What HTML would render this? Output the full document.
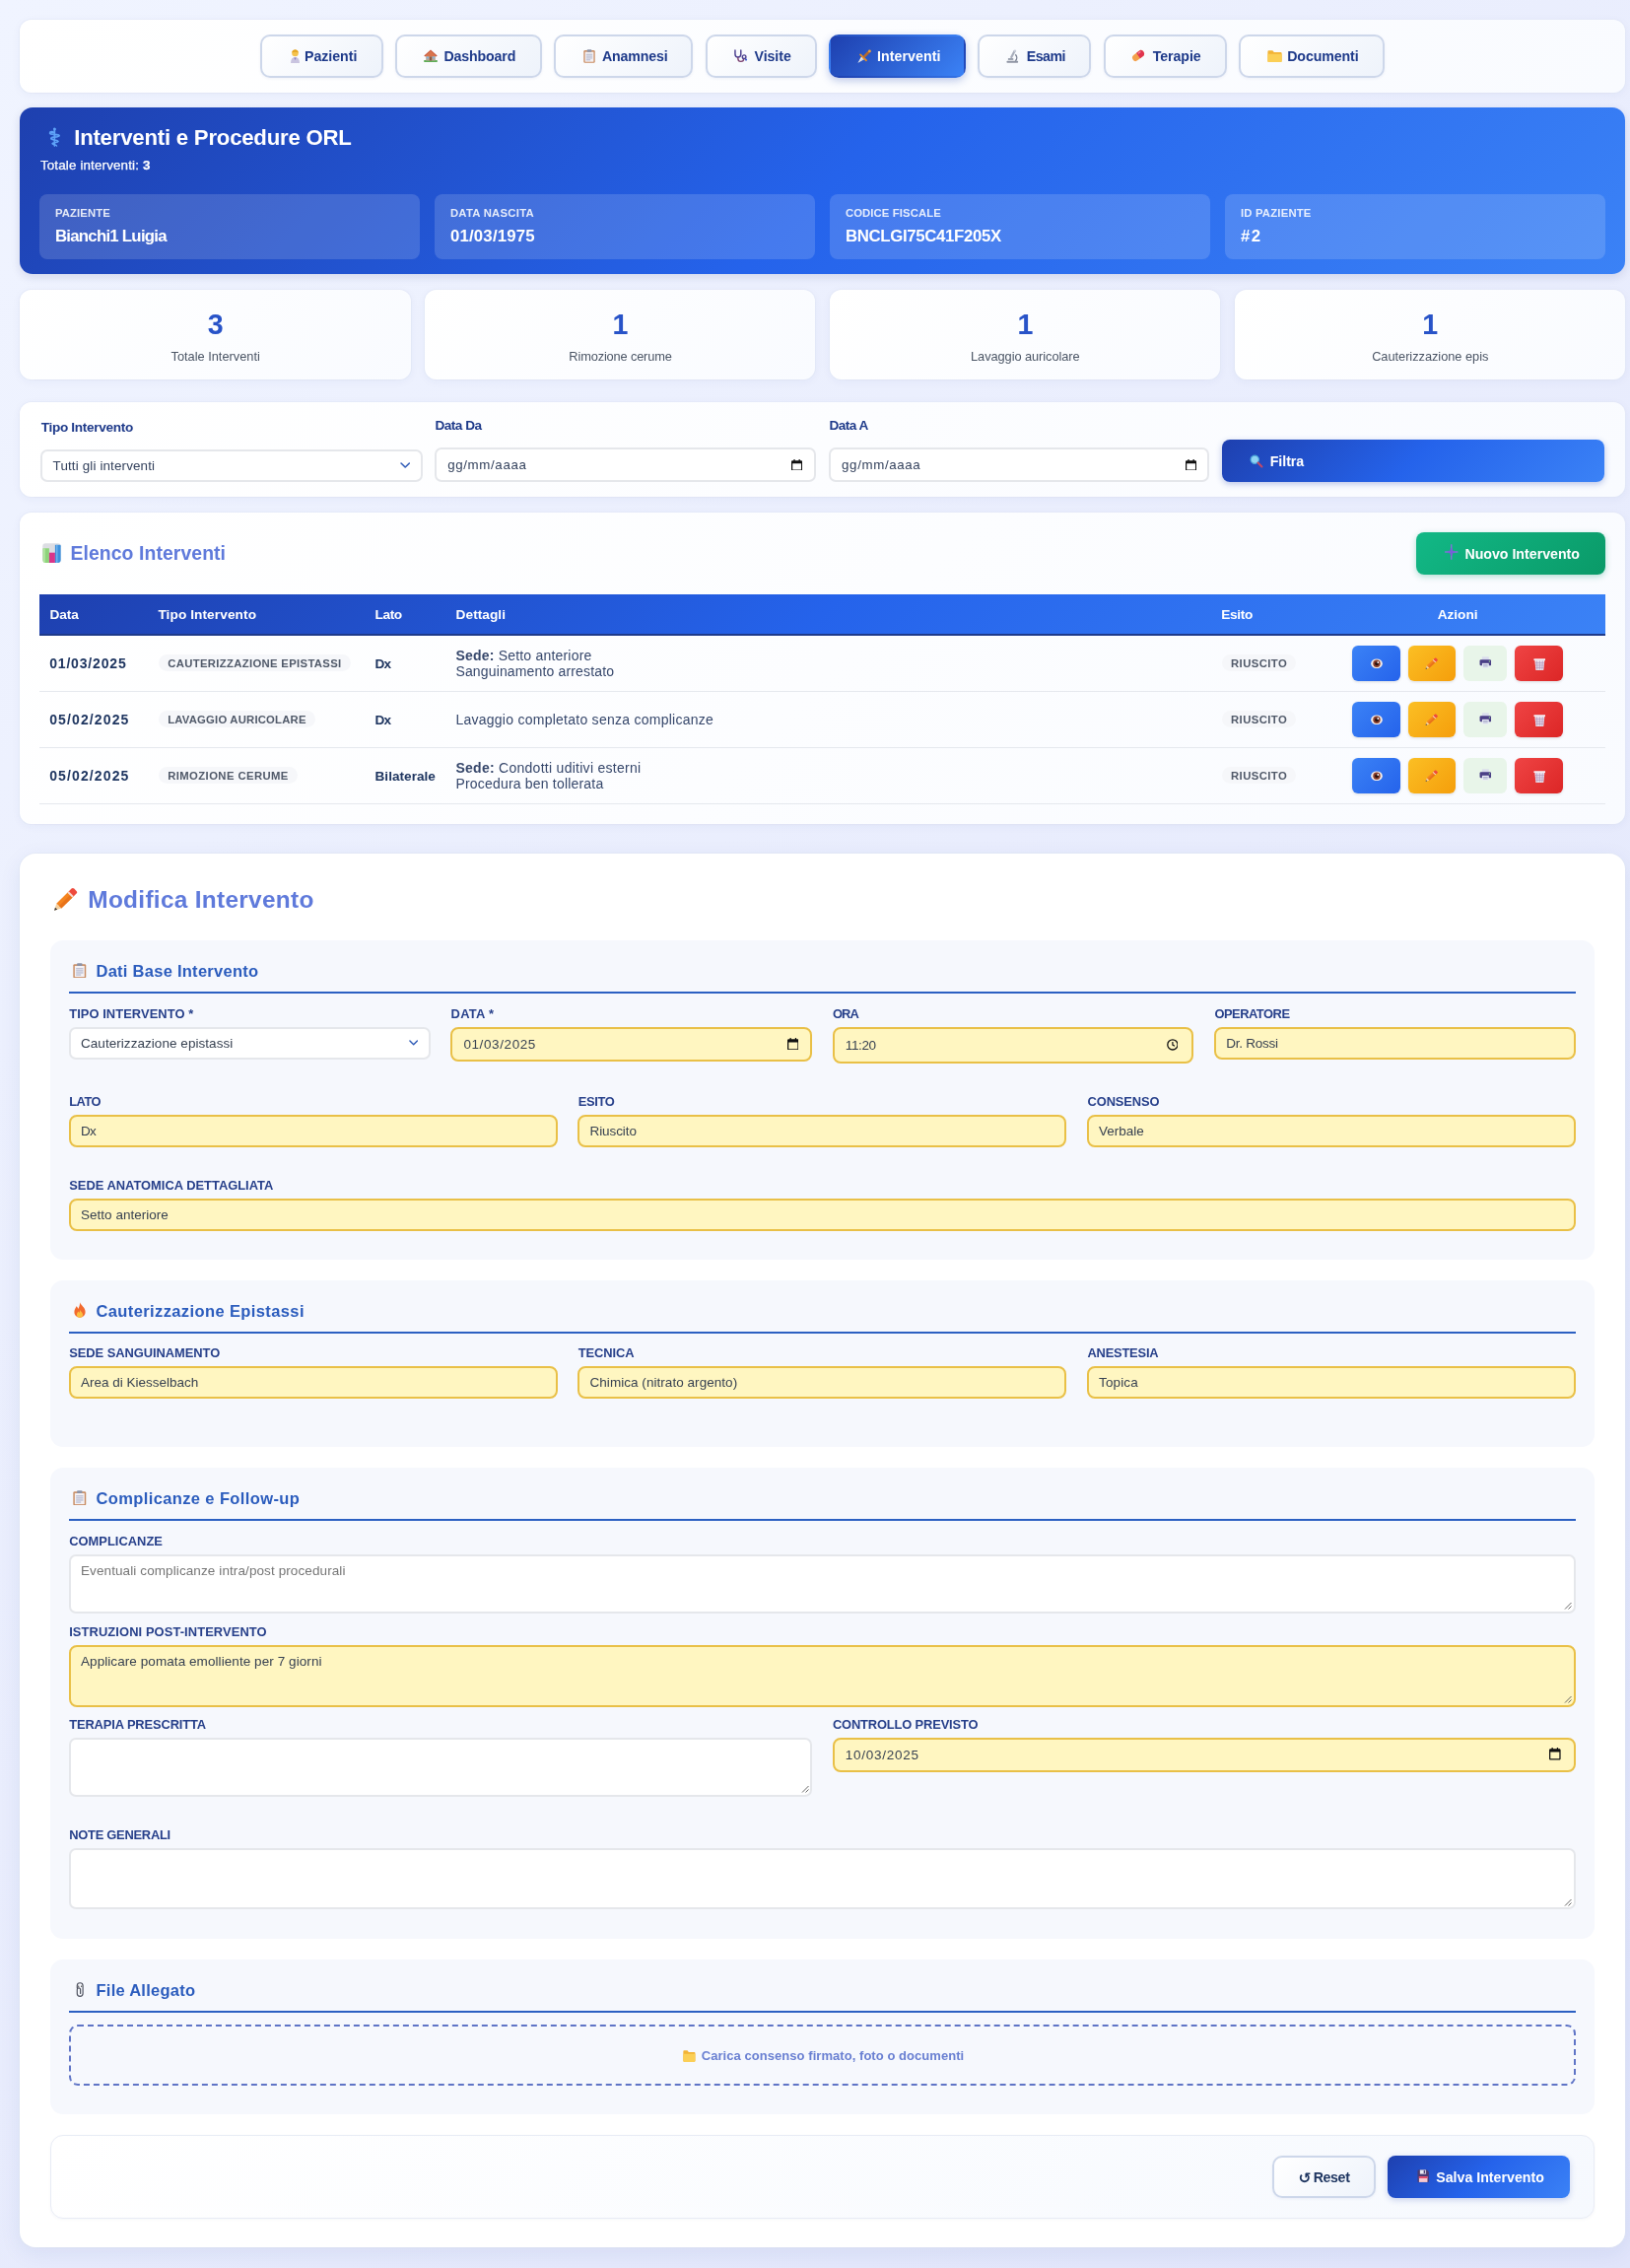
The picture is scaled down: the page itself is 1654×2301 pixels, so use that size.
<!DOCTYPE html>
<html lang="it"><head><meta charset="utf-8"><title>Interventi e Procedure ORL</title>
<style>
*{box-sizing:border-box;margin:0;padding:0}
html,body{width:1654px;height:2301px;overflow:hidden}
body{font-family:'Liberation Sans',sans-serif;position:relative;background:linear-gradient(135deg,#f0f4ff 0%,#e1e5fb 100%)}
span,label,h1,h2,h3,p,b{white-space:pre}
h1,h2,h3{font-weight:700}
.page{overflow:hidden;will-change:transform}
.card{background:linear-gradient(135deg,#ffffff 0%,#f9fbff 100%);border-radius:12px;box-shadow:0 2px 10px rgba(30,58,138,.05),0 0 0 1px rgba(228,233,246,.6)}
.nb{border:2px solid #cdd7ea;border-radius:10px;background:linear-gradient(135deg,#ffffff 0%,#eef3fb 100%);box-shadow:0 1px 3px rgba(30,58,138,.06)}
.nb.on{border-color:transparent;background:linear-gradient(135deg,#1e40af 0%,#3b82f6 100%);box-shadow:0 3px 8px rgba(30,64,175,.28)}
.hdr{background:linear-gradient(135deg,#1e40af 0%,#2563eb 50%,#3b82f6 100%);border-radius:13px;box-shadow:0 3px 10px rgba(30,41,100,.13)}
.ib{background:rgba(255,255,255,.15);border-radius:8px}
.inp{border:2px solid #e5e7eb;border-radius:7px;background:#fff}
.inp.y{border:2px solid #e9c047;background:#fff6c1;border-radius:8px}
.btn{border-radius:8px}
.sec{background:#f6f8fd;border-radius:13px}
.ul{background:#2c60c2}
.badge{background:#f6f7fa;border-radius:9px}
.ab{border-radius:6px;box-shadow:0 1px 3px rgba(0,0,0,.12)}

</style></head>
<body>
<main class="page" style="position:absolute;left:0.00px;top:0.00px;width:1654.00px;height:2301.00px;">
<nav class="card" style="position:absolute;left:20.00px;top:20.00px;width:1629.00px;height:74.00px;"><a class="nb" style="position:absolute;left:244.00px;top:15.00px;width:125.00px;height:44.00px;"><svg class="ic" viewBox="0 0 11 14" width="11" height="14" preserveAspectRatio="none" style="position:absolute;left:28.20px;top:12.80px;"><path d="M1 14c0-4 1.5-6 4.5-6s4.5 2 4.5 6z" fill="#c9c4e0"/><path d="M4.2 8.5l1.3 2.5 1.3-2.5z" fill="#8b7fc0"/><circle cx="5.5" cy="4" r="3.3" fill="#f5c34d"/><path d="M2.2 3.4c.3-2.2 1.8-3.2 3.3-3.2s3 .9 3.3 3.2c-1.2-.9-5.4-.9-6.600 0z" fill="#e5a520"/></svg><span style="position:absolute;left:43.00px;top:12.00px;font-size:14.2px;line-height:16px;font-weight:700;color:#1e3a8a;letter-spacing:-0.032px;">Pazienti</span></a><a class="nb" style="position:absolute;left:381.00px;top:15.00px;width:149.00px;height:44.00px;"><svg class="ic" viewBox="0 0 14 13" width="14" height="13" preserveAspectRatio="none" style="position:absolute;left:27.00px;top:13.30px;"><rect x="0" y="11" width="14" height="2" rx="1" fill="#5fae57"/><rect x="2.2" y="5.5" width="9.600" height="6" fill="#b9a79a"/><path d="M.3 6.400 7 .5l6.700 5.900-1 1L7 2.500 1.300 7.400z" fill="#c8553a"/><path d="M7 1.800 2.200 6v1.200h9.600V6z" fill="#d9744c"/><rect x="5.800" y="7.500" width="2.400" height="4" fill="#8a5a44"/><rect x="3" y="7.500" width="1.800" height="1.800" fill="#7fb6e6"/><rect x="9.200" y="7.500" width="1.800" height="1.800" fill="#7fb6e6"/></svg><span style="position:absolute;left:47.50px;top:12.00px;font-size:14.2px;line-height:16px;font-weight:700;color:#1e3a8a;letter-spacing:-0.151px;">Dashboard</span></a><a class="nb" style="position:absolute;left:542.00px;top:15.00px;width:141.00px;height:44.00px;"><svg class="ic" viewBox="0 0 12 15" width="12" height="14" preserveAspectRatio="none" style="position:absolute;left:27.50px;top:12.80px;"><rect x=".3" y="1.200" width="11.400" height="13.500" rx="1.300" fill="#c98d63"/><rect x="1.600" y="2.800" width="8.800" height="10.800" fill="#f4f1f4"/><rect x="3.600" y=".2" width="4.800" height="2.800" rx=".8" fill="#8d93a6"/><path d="M2.800 5.600h6.400M2.800 7.600h6.400M2.800 9.600h6.400M2.800 11.600h4.400" stroke="#9aa3c2" stroke-width=".8"/></svg><span style="position:absolute;left:46.90px;top:12.00px;font-size:14.2px;line-height:16px;font-weight:700;color:#1e3a8a;letter-spacing:-0.130px;">Anamnesi</span></a><a class="nb" style="position:absolute;left:696.00px;top:15.00px;width:113.00px;height:44.00px;"><svg class="ic" viewBox="0 0 15 14" width="14.6" height="13.5" preserveAspectRatio="none" style="position:absolute;left:26.20px;top:13.05px;"><path d="M2 1v4.200a3 3 0 0 0 6 0V1" fill="none" stroke="#4b3f8f" stroke-width="1.500" stroke-linecap="round"/><path d="M5 8.200v1.600a3 3 0 0 0 6 0V9.300" fill="none" stroke="#7a3f6f" stroke-width="1.400"/><circle cx="11.400" cy="8" r="1.900" fill="none" stroke="#4b3f8f" stroke-width="1.400"/><circle cx="13.400" cy="11" r="1.100" fill="#3b5bd0"/></svg><span style="position:absolute;left:47.50px;top:12.00px;font-size:14.2px;line-height:16px;font-weight:700;color:#1e3a8a;letter-spacing:-0.062px;">Visite</span></a><a class="nb on" style="position:absolute;left:821.00px;top:15.00px;width:139.00px;height:44.00px;"><svg class="ic" viewBox="0 0 15 15" width="14.3" height="14.3" preserveAspectRatio="none" style="position:absolute;left:26.70px;top:12.65px;"><path d="M.5 14.500 4.400 7.600l3 3z" fill="#eef1f7"/><path d="M.5 14.500l5.400-5.400 1.500 1.500z" fill="#c3cadb"/><path d="M3.200 5.600l6.200 6.200" stroke="#e48b25" stroke-width="1.900" stroke-linecap="round"/><path d="M7.600 7.400l4.600-4.600" stroke="#b86a2a" stroke-width="2.600" stroke-linecap="round"/><circle cx="13" cy="2" r="1.500" fill="#eda03a"/></svg><span style="position:absolute;left:46.90px;top:12.00px;font-size:14.2px;line-height:16px;font-weight:700;color:#ffffff;letter-spacing:0.082px;">Interventi</span></a><a class="nb" style="position:absolute;left:972.00px;top:15.00px;width:115.00px;height:44.00px;"><svg class="ic" viewBox="0 0 15 15" width="14.6" height="14" preserveAspectRatio="none" style="position:absolute;left:26.40px;top:12.80px;"><rect x="1.500" y="12.600" width="12" height="2" rx=".8" fill="#8e94a3"/><path d="M9 1.200l2 1-4 7.600-2-1z" fill="#a7adbb"/><path d="M10.600 5.600a5 5 0 0 1 0 7" fill="none" stroke="#7d8495" stroke-width="1.500"/><rect x="3" y="10" width="5.500" height="1.400" fill="#6f7688"/><circle cx="10.200" cy="1.900" r="1.300" fill="#c7ccd8"/></svg><span style="position:absolute;left:47.80px;top:12.00px;font-size:14.2px;line-height:16px;font-weight:700;color:#1e3a8a;letter-spacing:-0.528px;">Esami</span></a><a class="nb" style="position:absolute;left:1100.00px;top:15.00px;width:125.00px;height:44.00px;"><svg class="ic" viewBox="0 0 15 13" width="14" height="13" preserveAspectRatio="none" style="position:absolute;left:26.30px;top:13.30px;"><g transform="rotate(-35 7.500 6.500)"><rect x="0.500" y="3" width="14" height="7" rx="3.500" fill="#f3a04b"/><path d="M7.500 3H11a3.500 3.500 0 0 1 0 7H7.500z" fill="#e0344f"/><rect x="8.500" y="4" width="3.500" height="1.300" rx=".6" fill="#f58aa0"/></g></svg><span style="position:absolute;left:47.70px;top:12.00px;font-size:14.2px;line-height:16px;font-weight:700;color:#1e3a8a;letter-spacing:-0.070px;">Terapie</span></a><a class="nb" style="position:absolute;left:1237.00px;top:15.00px;width:148.00px;height:44.00px;"><svg class="ic" viewBox="0 0 15 12" width="15" height="12.5" preserveAspectRatio="none" style="position:absolute;left:26.60px;top:13.55px;"><path d="M.4 1.600c0-.8.500-1.300 1.300-1.300h3.600l1.500 1.600h6.500c.8 0 1.300.5 1.300 1.300v7.200c0 .8-.5 1.300-1.300 1.300H1.700c-.8 0-1.300-.5-1.300-1.300z" fill="#f2b336"/><path d="M.4 3.600h14.200v6.800c0 .8-.5 1.300-1.300 1.300H1.700c-.8 0-1.300-.5-1.300-1.300z" fill="#fbcf56"/></svg><span style="position:absolute;left:47.20px;top:12.00px;font-size:14.2px;line-height:16px;font-weight:700;color:#1e3a8a;letter-spacing:-0.102px;">Documenti</span></a></nav>
<header class="hdr" style="position:absolute;left:20.00px;top:109.00px;width:1629.00px;height:168.50px;"><span style="position:absolute;left:28.60px;top:17.00px;font-size:25px;line-height:28px;font-weight:400;color:#60a5fa;letter-spacing:0.000px;font-family:'DejaVu Sans',sans-serif;-webkit-text-stroke:.7px #60a5fa;">⚕</span><h1 style="position:absolute;left:55.20px;top:18.00px;font-size:22.2px;line-height:25px;font-weight:700;color:#ffffff;letter-spacing:-0.223px;">Interventi e Procedure ORL</h1><p style="position:absolute;left:20.90px;top:51.00px;font-size:13.4px;line-height:15px;font-weight:400;color:#ffffff;letter-spacing:0.148px;-webkit-text-stroke:.25px #fff;">Totale interventi: <b>3</b></p><div class="ib" style="position:absolute;left:20.00px;top:88.00px;width:385.80px;height:66.00px;"><span style="position:absolute;left:15.90px;top:13.00px;font-size:11.3px;line-height:12px;font-weight:700;color:rgba(255,255,255,.86);letter-spacing:0.124px;">PAZIENTE</span><span style="position:absolute;left:15.90px;top:33.00px;font-size:16.8px;line-height:19px;font-weight:700;color:#ffffff;letter-spacing:-0.738px;">Bianchi1 Luigia</span></div><div class="ib" style="position:absolute;left:421.00px;top:88.00px;width:385.80px;height:66.00px;"><span style="position:absolute;left:15.90px;top:13.00px;font-size:11.3px;line-height:12px;font-weight:700;color:rgba(255,255,255,.86);letter-spacing:0.273px;">DATA NASCITA</span><span style="position:absolute;left:15.90px;top:33.00px;font-size:16.8px;line-height:19px;font-weight:700;color:#ffffff;letter-spacing:0.200px;">01/03/1975</span></div><div class="ib" style="position:absolute;left:822.00px;top:88.00px;width:385.80px;height:66.00px;"><span style="position:absolute;left:15.90px;top:13.00px;font-size:11.3px;line-height:12px;font-weight:700;color:rgba(255,255,255,.86);letter-spacing:0.115px;">CODICE FISCALE</span><span style="position:absolute;left:15.90px;top:33.00px;font-size:16.8px;line-height:19px;font-weight:700;color:#ffffff;letter-spacing:-0.328px;">BNCLGI75C41F205X</span></div><div class="ib" style="position:absolute;left:1223.00px;top:88.00px;width:385.80px;height:66.00px;"><span style="position:absolute;left:15.90px;top:13.00px;font-size:11.3px;line-height:12px;font-weight:700;color:rgba(255,255,255,.86);letter-spacing:0.203px;">ID PAZIENTE</span><span style="position:absolute;left:15.90px;top:33.00px;font-size:16.8px;line-height:19px;font-weight:700;color:#ffffff;letter-spacing:1.628px;">#2</span></div></header>
<section class="card" style="position:absolute;left:20.00px;top:294.30px;width:396.50px;height:91.00px;"><span style="position:absolute;left:198.65px;transform:translateX(-50%);top:18.70px;font-size:28.6px;line-height:32px;font-weight:700;color:#2853c8;letter-spacing:0.000px;">3</span><span style="position:absolute;left:198.65px;transform:translateX(-50%);top:59.70px;font-size:12.8px;line-height:15px;font-weight:400;color:#4b5565;letter-spacing:-0.003px;">Totale Interventi</span></section>
<section class="card" style="position:absolute;left:430.90px;top:294.30px;width:396.50px;height:91.00px;"><span style="position:absolute;left:198.65px;transform:translateX(-50%);top:18.70px;font-size:28.6px;line-height:32px;font-weight:700;color:#2853c8;letter-spacing:0.000px;">1</span><span style="position:absolute;left:198.65px;transform:translateX(-50%);top:59.70px;font-size:12.8px;line-height:15px;font-weight:400;color:#4b5565;letter-spacing:-0.146px;">Rimozione cerume</span></section>
<section class="card" style="position:absolute;left:841.70px;top:294.30px;width:396.50px;height:91.00px;"><span style="position:absolute;left:198.65px;transform:translateX(-50%);top:18.70px;font-size:28.6px;line-height:32px;font-weight:700;color:#2853c8;letter-spacing:0.000px;">1</span><span style="position:absolute;left:198.65px;transform:translateX(-50%);top:59.70px;font-size:12.8px;line-height:15px;font-weight:400;color:#4b5565;letter-spacing:-0.061px;">Lavaggio auricolare</span></section>
<section class="card" style="position:absolute;left:1252.60px;top:294.30px;width:396.50px;height:91.00px;"><span style="position:absolute;left:198.65px;transform:translateX(-50%);top:18.70px;font-size:28.6px;line-height:32px;font-weight:700;color:#2853c8;letter-spacing:0.000px;">1</span><span style="position:absolute;left:198.65px;transform:translateX(-50%);top:59.70px;font-size:12.8px;line-height:15px;font-weight:400;color:#4b5565;letter-spacing:-0.031px;">Cauterizzazione epis</span></section>
<section class="card" style="position:absolute;left:20.00px;top:408.00px;width:1629.00px;height:96.00px;"><label style="position:absolute;left:21.70px;top:18.00px;font-size:13.6px;line-height:15px;font-weight:700;color:#1e3a8a;letter-spacing:-0.310px;">Tipo Intervento</label><div class="inp" style="position:absolute;left:21.30px;top:48.00px;width:387.30px;height:33.00px;"><span style="position:absolute;left:10.30px;top:7.00px;font-size:13.4px;line-height:15px;font-weight:400;color:#33415c;letter-spacing:0.141px;">Tutti gli interventi</span><svg class="ic" viewBox="0 0 10 6" width="10.4" height="6" preserveAspectRatio="none" style="position:absolute;left:362.50px;top:11.30px;"><path d="M1 1l4 4 4-4" fill="none" stroke="#2f5bb7" stroke-width="1.500" stroke-linecap="round" stroke-linejoin="round"/></svg></div><label style="position:absolute;left:421.50px;top:16.00px;font-size:13.6px;line-height:15px;font-weight:700;color:#1e3a8a;letter-spacing:-0.521px;">Data Da</label><div class="inp" style="position:absolute;left:421.30px;top:46.00px;width:386.30px;height:35.00px;"><span style="position:absolute;left:10.90px;top:8.00px;font-size:13.3px;line-height:15px;font-weight:400;color:#33415c;letter-spacing:0.642px;">gg/mm/aaaa</span><svg class="ic" viewBox="0 0 12 13" width="11.2" height="11.8" preserveAspectRatio="none" style="position:absolute;left:359.80px;top:9.60px;"><path d="M2.600 0v1.300H1.300C.6 1.300 0 1.900 0 2.600v9.100C0 12.400.6 13 1.300 13h9.400c.7 0 1.300-.6 1.300-1.300V2.600c0-.7-.6-1.300-1.300-1.300H9.400V0H8.100v1.300H3.900V0zM1.300 4.600h9.400v7.100H1.300z" fill="#111"/></svg></div><label style="position:absolute;left:821.40px;top:16.00px;font-size:13.6px;line-height:15px;font-weight:700;color:#1e3a8a;letter-spacing:-0.512px;">Data A</label><div class="inp" style="position:absolute;left:821.20px;top:46.00px;width:386.30px;height:35.00px;"><span style="position:absolute;left:10.90px;top:8.00px;font-size:13.3px;line-height:15px;font-weight:400;color:#33415c;letter-spacing:0.642px;">gg/mm/aaaa</span><svg class="ic" viewBox="0 0 12 13" width="11.2" height="11.8" preserveAspectRatio="none" style="position:absolute;left:359.80px;top:9.60px;"><path d="M2.600 0v1.300H1.300C.6 1.300 0 1.900 0 2.600v9.100C0 12.400.6 13 1.300 13h9.400c.7 0 1.300-.6 1.300-1.300V2.600c0-.7-.6-1.300-1.300-1.300H9.400V0H8.100v1.300H3.900V0zM1.300 4.600h9.400v7.100H1.300z" fill="#111"/></svg></div><button class="btn" style="position:absolute;left:1220.00px;top:38.00px;width:388.00px;height:42.60px;border:0;background:linear-gradient(135deg,#1e40af 0%,#2563eb 50%,#3b82f6 100%);box-shadow:0 2px 6px rgba(30,64,175,.3);"><svg class="ic" viewBox="0 0 14 14" width="13.6" height="13.6" preserveAspectRatio="none" style="position:absolute;left:28.40px;top:15.20px;"><circle cx="5.400" cy="5.400" r="4.300" fill="#8fd3f4" stroke="#4aa3d8" stroke-width="1.200"/><path d="M8.800 8.800l4 4" stroke="#c0486a" stroke-width="2.200" stroke-linecap="round"/></svg><span style="position:absolute;left:48.70px;top:14.00px;font-size:14.2px;line-height:16px;font-weight:700;color:#ffffff;letter-spacing:-0.037px;">Filtra</span></button></section>
<section class="card" style="position:absolute;left:20.00px;top:520.00px;width:1629.00px;height:315.60px;"><svg class="ic" viewBox="0 0 19 20" width="19" height="20.2" preserveAspectRatio="none" style="position:absolute;left:23.40px;top:31.20px;"><clipPath id="chc"><rect x=".3" y=".3" width="18.400" height="19.400" rx="2.800"/></clipPath><g clip-path="url(#chc)"><rect width="19" height="20" fill="#dcdde3"/><rect x=".3" y="5.200" width="6.600" height="15" fill="#8ed47c"/><rect x="6.900" y="9.600" width="6" height="11" fill="#d8368a"/><rect x="12.900" y="1.800" width="6" height="19" fill="#3d90dd"/><rect x="1.200" y="5.200" width="1.600" height="15" fill="#b5e6a4"/><rect x="14" y="1.800" width="1.500" height="19" fill="#6fb1ec"/></g></svg><h2 style="position:absolute;left:51.50px;top:30.00px;font-size:19.4px;line-height:22px;font-weight:700;color:#5f7adb;letter-spacing:0.078px;">Elenco Interventi</h2><button class="btn" style="position:absolute;left:1417.00px;top:20.20px;width:192.20px;height:42.80px;border:0;background:linear-gradient(135deg,#12b886 0%,#0a9a68 100%);box-shadow:0 2px 6px rgba(5,150,105,.3);"><svg class="ic" viewBox="0 0 14 16" width="13.5" height="16" preserveAspectRatio="none" style="position:absolute;left:29.20px;top:12.20px;"><path d="M7 .8v14.400M.6 8h12.800" stroke="#8a6ee0" stroke-width="1.500" stroke-linecap="round" opacity=".9"/><path d="M7 5.500v5M4.500 8h5" stroke="#7a5fd8" stroke-width="2.400" stroke-linecap="round"/></svg><span style="position:absolute;left:49.40px;top:13.80px;font-size:14.2px;line-height:16px;font-weight:700;color:#ffffff;letter-spacing:-0.005px;">Nuovo Intervento</span></button><div class="tbl" style="position:absolute;left:20.00px;top:83.00px;width:1589.00px;height:213.00px;"><div class="thead" style="position:absolute;left:0.00px;top:0.00px;width:1589.00px;height:42.00px;background:linear-gradient(135deg,#1e40af 0%,#2563eb 50%,#3b82f6 100%);border-bottom:2px solid #1e3a8a;"><span style="position:absolute;left:10.40px;top:13.00px;font-size:13.7px;line-height:15px;font-weight:700;color:#ffffff;letter-spacing:-0.057px;">Data</span><span style="position:absolute;left:120.40px;top:13.00px;font-size:13.7px;line-height:15px;font-weight:700;color:#ffffff;letter-spacing:0.071px;">Tipo Intervento</span><span style="position:absolute;left:340.50px;top:13.00px;font-size:13.7px;line-height:15px;font-weight:700;color:#ffffff;letter-spacing:-0.402px;">Lato</span><span style="position:absolute;left:422.60px;top:13.00px;font-size:13.7px;line-height:15px;font-weight:700;color:#ffffff;letter-spacing:0.028px;">Dettagli</span><span style="position:absolute;left:1199.30px;top:13.00px;font-size:13.7px;line-height:15px;font-weight:700;color:#ffffff;letter-spacing:-0.342px;">Esito</span><span style="position:absolute;left:1418.70px;top:13.00px;font-size:13.7px;line-height:15px;font-weight:700;color:#ffffff;letter-spacing:-0.033px;">Azioni</span></div><div class="tr" style="position:absolute;left:0.00px;top:42.00px;width:1589.00px;height:57.00px;border-bottom:1px solid #e5e8ee;"><span style="position:absolute;left:10.20px;top:20.00px;font-size:14px;line-height:16px;font-weight:700;color:#1e3560;letter-spacing:0.825px;">01/03/2025</span><div class="badge" style="position:absolute;left:120.60px;top:19.40px;width:195.60px;height:17.00px;"></div><span style="position:absolute;left:130.20px;top:22.00px;font-size:11.3px;line-height:12px;font-weight:700;color:#505969;letter-spacing:0.333px;">CAUTERIZZAZIONE EPISTASSI</span><span style="position:absolute;left:340.50px;top:21.00px;font-size:13.6px;line-height:15px;font-weight:700;color:#1e3560;letter-spacing:-0.891px;">Dx</span><span style="position:absolute;left:422.40px;top:12.00px;font-size:14px;line-height:16px;font-weight:400;color:#36476b;letter-spacing:0.204px;"><b>Sede:</b> Setto anteriore</span><span style="position:absolute;left:422.40px;top:28.00px;font-size:14px;line-height:16px;font-weight:400;color:#36476b;letter-spacing:0.154px;">Sanguinamento arrestato</span><div class="badge" style="position:absolute;left:1200.40px;top:19.40px;width:74.40px;height:17.00px;"></div><span style="position:absolute;left:1209.00px;top:22.00px;font-size:11.3px;line-height:12px;font-weight:700;color:#505969;letter-spacing:0.417px;">RIUSCITO</span><button class="ab" style="position:absolute;left:1332.00px;top:10.00px;width:48.80px;height:36.00px;border:0;background:linear-gradient(135deg,#3b82f6,#2563eb);"></button><svg class="ic" viewBox="0 0 12 10.600" width="12" height="10.6" preserveAspectRatio="none" style="position:absolute;left:1350.80px;top:22.60px;"><ellipse cx="6" cy="5.300" rx="5.800" ry="4.900" fill="#f3ece9"/><circle cx="6" cy="5.300" r="3.700" fill="#8a3f2c"/><circle cx="6" cy="5.300" r="1.900" fill="#2b1210"/><circle cx="7.300" cy="4" r=".9" fill="#fff"/></svg><button class="ab" style="position:absolute;left:1389.00px;top:10.00px;width:48.30px;height:36.00px;border:0;background:linear-gradient(135deg,#fbbf24,#f59e0b);"></button><svg class="ic" viewBox="0 0 14 14" width="13.5" height="12.4" preserveAspectRatio="none" style="position:absolute;left:1406.00px;top:22.40px;"><path d="M1.800 9.400 8.800 2.400l2.800 2.800-7 7z" fill="#f5841f"/><path d="M3.200 10.800l7-7 1.400 1.400-7 7z" fill="#e8731a"/><path d="M8 3.200l.8-.8 2.800 2.800-.8.800z" fill="#f7d9d4"/><path d="M8.800 2.400l1.500-1.500c.5-.5 1-.5 1.500 0l1.300 1.300c.5.500.5 1 0 1.500l-1.500 1.500z" fill="#ee4a3c"/><path d="M1.800 9.400l2.800 2.800-4 1.200z" fill="#f3cf9e"/><path d="M.6 13.400l.5-1.700 1.200 1.200z" fill="#2b2b2b"/></svg><button class="ab" style="position:absolute;left:1445.00px;top:10.00px;width:43.80px;height:36.00px;border:0;background:#e8f5e9;box-shadow:none;"></button><svg class="ic" viewBox="0 0 14 13" width="12.7" height="12" preserveAspectRatio="none" style="position:absolute;left:1460.50px;top:21.20px;"><rect x="3.200" y=".4" width="7.600" height="4" fill="#d9dced"/><rect x=".6" y="3.600" width="12.800" height="6.400" rx="1.400" fill="#4a3f86"/><rect x="3.200" y="7.400" width="7.600" height="5.200" fill="#e9ebf6"/><path d="M4.400 9.200h5.200M4.400 10.800h5.200" stroke="#8a8fb5" stroke-width=".7"/><circle cx="11.400" cy="5.400" r=".7" fill="#9be28f"/></svg><button class="ab" style="position:absolute;left:1497.00px;top:10.00px;width:49.00px;height:36.00px;border:0;background:linear-gradient(135deg,#ef4444,#dc2626);"></button><svg class="ic" viewBox="0 0 12.700 13.300" width="12.7" height="13.3" preserveAspectRatio="none" style="position:absolute;left:1515.50px;top:22.00px;"><path d="M1.300 2.600h10.100l-1.100 10.400H2.400z" fill="#e9dfe9"/><rect x=".4" y="1.300" width="11.900" height="1.800" rx=".5" fill="#f6eff5"/><path d="M3.400 3.400l.5 9M6.350 3.400v9M9.300 3.400l-.5 9M1.800 5.600h9.100M2 8h8.700M2.300 10.400h8.100" stroke="#b89ac0" stroke-width=".8"/></svg></div><div class="tr" style="position:absolute;left:0.00px;top:99.00px;width:1589.00px;height:57.00px;border-bottom:1px solid #e5e8ee;"><span style="position:absolute;left:10.20px;top:20.00px;font-size:14px;line-height:16px;font-weight:700;color:#1e3560;letter-spacing:1.125px;">05/02/2025</span><div class="badge" style="position:absolute;left:120.60px;top:19.40px;width:159.90px;height:17.00px;"></div><span style="position:absolute;left:130.20px;top:22.00px;font-size:11.3px;line-height:12px;font-weight:700;color:#505969;letter-spacing:0.205px;">LAVAGGIO AURICOLARE</span><span style="position:absolute;left:340.50px;top:21.00px;font-size:13.6px;line-height:15px;font-weight:700;color:#1e3560;letter-spacing:-0.891px;">Dx</span><span style="position:absolute;left:422.40px;top:20.00px;font-size:14px;line-height:16px;font-weight:400;color:#36476b;letter-spacing:0.257px;">Lavaggio completato senza complicanze</span><div class="badge" style="position:absolute;left:1200.40px;top:19.40px;width:74.40px;height:17.00px;"></div><span style="position:absolute;left:1209.00px;top:22.00px;font-size:11.3px;line-height:12px;font-weight:700;color:#505969;letter-spacing:0.417px;">RIUSCITO</span><button class="ab" style="position:absolute;left:1332.00px;top:10.00px;width:48.80px;height:36.00px;border:0;background:linear-gradient(135deg,#3b82f6,#2563eb);"></button><svg class="ic" viewBox="0 0 12 10.600" width="12" height="10.6" preserveAspectRatio="none" style="position:absolute;left:1350.80px;top:22.60px;"><ellipse cx="6" cy="5.300" rx="5.800" ry="4.900" fill="#f3ece9"/><circle cx="6" cy="5.300" r="3.700" fill="#8a3f2c"/><circle cx="6" cy="5.300" r="1.900" fill="#2b1210"/><circle cx="7.300" cy="4" r=".9" fill="#fff"/></svg><button class="ab" style="position:absolute;left:1389.00px;top:10.00px;width:48.30px;height:36.00px;border:0;background:linear-gradient(135deg,#fbbf24,#f59e0b);"></button><svg class="ic" viewBox="0 0 14 14" width="13.5" height="12.4" preserveAspectRatio="none" style="position:absolute;left:1406.00px;top:22.40px;"><path d="M1.800 9.400 8.800 2.400l2.800 2.800-7 7z" fill="#f5841f"/><path d="M3.200 10.800l7-7 1.400 1.400-7 7z" fill="#e8731a"/><path d="M8 3.200l.8-.8 2.800 2.800-.8.800z" fill="#f7d9d4"/><path d="M8.800 2.400l1.500-1.500c.5-.5 1-.5 1.500 0l1.300 1.300c.5.500.5 1 0 1.500l-1.500 1.500z" fill="#ee4a3c"/><path d="M1.800 9.400l2.800 2.800-4 1.200z" fill="#f3cf9e"/><path d="M.6 13.400l.5-1.700 1.200 1.200z" fill="#2b2b2b"/></svg><button class="ab" style="position:absolute;left:1445.00px;top:10.00px;width:43.80px;height:36.00px;border:0;background:#e8f5e9;box-shadow:none;"></button><svg class="ic" viewBox="0 0 14 13" width="12.7" height="12" preserveAspectRatio="none" style="position:absolute;left:1460.50px;top:21.20px;"><rect x="3.200" y=".4" width="7.600" height="4" fill="#d9dced"/><rect x=".6" y="3.600" width="12.800" height="6.400" rx="1.400" fill="#4a3f86"/><rect x="3.200" y="7.400" width="7.600" height="5.200" fill="#e9ebf6"/><path d="M4.400 9.200h5.200M4.400 10.800h5.200" stroke="#8a8fb5" stroke-width=".7"/><circle cx="11.400" cy="5.400" r=".7" fill="#9be28f"/></svg><button class="ab" style="position:absolute;left:1497.00px;top:10.00px;width:49.00px;height:36.00px;border:0;background:linear-gradient(135deg,#ef4444,#dc2626);"></button><svg class="ic" viewBox="0 0 12.700 13.300" width="12.7" height="13.3" preserveAspectRatio="none" style="position:absolute;left:1515.50px;top:22.00px;"><path d="M1.300 2.600h10.100l-1.100 10.400H2.400z" fill="#e9dfe9"/><rect x=".4" y="1.300" width="11.900" height="1.800" rx=".5" fill="#f6eff5"/><path d="M3.400 3.400l.5 9M6.350 3.400v9M9.300 3.400l-.5 9M1.800 5.600h9.100M2 8h8.700M2.300 10.400h8.100" stroke="#b89ac0" stroke-width=".8"/></svg></div><div class="tr" style="position:absolute;left:0.00px;top:156.00px;width:1589.00px;height:57.00px;border-bottom:1px solid #e5e8ee;"><span style="position:absolute;left:10.20px;top:20.00px;font-size:14px;line-height:16px;font-weight:700;color:#1e3560;letter-spacing:1.125px;">05/02/2025</span><div class="badge" style="position:absolute;left:120.60px;top:19.40px;width:141.80px;height:17.00px;"></div><span style="position:absolute;left:130.20px;top:22.00px;font-size:11.3px;line-height:12px;font-weight:700;color:#505969;letter-spacing:0.406px;">RIMOZIONE CERUME</span><span style="position:absolute;left:340.50px;top:21.00px;font-size:13.6px;line-height:15px;font-weight:700;color:#1e3560;letter-spacing:0.020px;">Bilaterale</span><span style="position:absolute;left:422.40px;top:12.00px;font-size:14px;line-height:16px;font-weight:400;color:#36476b;letter-spacing:0.275px;"><b>Sede:</b> Condotti uditivi esterni</span><span style="position:absolute;left:422.40px;top:28.00px;font-size:14px;line-height:16px;font-weight:400;color:#36476b;letter-spacing:0.193px;">Procedura ben tollerata</span><div class="badge" style="position:absolute;left:1200.40px;top:19.40px;width:74.40px;height:17.00px;"></div><span style="position:absolute;left:1209.00px;top:22.00px;font-size:11.3px;line-height:12px;font-weight:700;color:#505969;letter-spacing:0.417px;">RIUSCITO</span><button class="ab" style="position:absolute;left:1332.00px;top:10.00px;width:48.80px;height:36.00px;border:0;background:linear-gradient(135deg,#3b82f6,#2563eb);"></button><svg class="ic" viewBox="0 0 12 10.600" width="12" height="10.6" preserveAspectRatio="none" style="position:absolute;left:1350.80px;top:22.60px;"><ellipse cx="6" cy="5.300" rx="5.800" ry="4.900" fill="#f3ece9"/><circle cx="6" cy="5.300" r="3.700" fill="#8a3f2c"/><circle cx="6" cy="5.300" r="1.900" fill="#2b1210"/><circle cx="7.300" cy="4" r=".9" fill="#fff"/></svg><button class="ab" style="position:absolute;left:1389.00px;top:10.00px;width:48.30px;height:36.00px;border:0;background:linear-gradient(135deg,#fbbf24,#f59e0b);"></button><svg class="ic" viewBox="0 0 14 14" width="13.5" height="12.4" preserveAspectRatio="none" style="position:absolute;left:1406.00px;top:22.40px;"><path d="M1.800 9.400 8.800 2.400l2.800 2.800-7 7z" fill="#f5841f"/><path d="M3.200 10.800l7-7 1.400 1.400-7 7z" fill="#e8731a"/><path d="M8 3.200l.8-.8 2.800 2.800-.8.800z" fill="#f7d9d4"/><path d="M8.800 2.400l1.500-1.500c.5-.5 1-.5 1.500 0l1.300 1.300c.5.500.5 1 0 1.500l-1.500 1.500z" fill="#ee4a3c"/><path d="M1.800 9.400l2.800 2.800-4 1.200z" fill="#f3cf9e"/><path d="M.6 13.400l.5-1.700 1.200 1.200z" fill="#2b2b2b"/></svg><button class="ab" style="position:absolute;left:1445.00px;top:10.00px;width:43.80px;height:36.00px;border:0;background:#e8f5e9;box-shadow:none;"></button><svg class="ic" viewBox="0 0 14 13" width="12.7" height="12" preserveAspectRatio="none" style="position:absolute;left:1460.50px;top:21.20px;"><rect x="3.200" y=".4" width="7.600" height="4" fill="#d9dced"/><rect x=".6" y="3.600" width="12.800" height="6.400" rx="1.400" fill="#4a3f86"/><rect x="3.200" y="7.400" width="7.600" height="5.200" fill="#e9ebf6"/><path d="M4.400 9.200h5.200M4.400 10.800h5.200" stroke="#8a8fb5" stroke-width=".7"/><circle cx="11.400" cy="5.400" r=".7" fill="#9be28f"/></svg><button class="ab" style="position:absolute;left:1497.00px;top:10.00px;width:49.00px;height:36.00px;border:0;background:linear-gradient(135deg,#ef4444,#dc2626);"></button><svg class="ic" viewBox="0 0 12.700 13.300" width="12.7" height="13.3" preserveAspectRatio="none" style="position:absolute;left:1515.50px;top:22.00px;"><path d="M1.300 2.600h10.100l-1.100 10.400H2.400z" fill="#e9dfe9"/><rect x=".4" y="1.300" width="11.900" height="1.800" rx=".5" fill="#f6eff5"/><path d="M3.400 3.400l.5 9M6.350 3.400v9M9.300 3.400l-.5 9M1.800 5.600h9.100M2 8h8.700M2.300 10.400h8.100" stroke="#b89ac0" stroke-width=".8"/></svg></div></div></section>
<form class="card" style="position:absolute;left:20.00px;top:866.00px;width:1629.00px;height:1414.40px;border-radius:17px;background:#ffffff;box-shadow:0 6px 22px rgba(30,58,138,.08),0 0 0 1px rgba(226,232,245,.6);border-radius:16px;"><svg class="ic" viewBox="0 0 14 14" width="25.2" height="24.8" preserveAspectRatio="none" style="position:absolute;left:33.80px;top:34.40px;"><path d="M1.800 9.400 8.800 2.400l2.800 2.800-7 7z" fill="#f5841f"/><path d="M3.200 10.800l7-7 1.400 1.400-7 7z" fill="#e8731a"/><path d="M8 3.200l.8-.8 2.800 2.800-.8.800z" fill="#f7d9d4"/><path d="M8.800 2.400l1.500-1.500c.5-.5 1-.5 1.500 0l1.300 1.300c.5.500.5 1 0 1.500l-1.500 1.500z" fill="#ee4a3c"/><path d="M1.800 9.400l2.800 2.800-4 1.200z" fill="#f3cf9e"/><path d="M.6 13.400l.5-1.700 1.200 1.200z" fill="#2b2b2b"/></svg><h2 style="position:absolute;left:69.30px;top:33.00px;font-size:24.4px;line-height:27px;font-weight:700;color:#5f7adb;letter-spacing:0.299px;">Modifica Intervento</h2>
<fieldset class="sec" style="position:absolute;left:30.80px;top:88.30px;width:1567.40px;height:324.00px;border:0;"><svg class="ic" viewBox="0 0 12 15" width="13.6" height="15.6" preserveAspectRatio="none" style="position:absolute;left:23.70px;top:22.60px;"><rect x=".3" y="1.200" width="11.400" height="13.500" rx="1.300" fill="#c98d63"/><rect x="1.600" y="2.800" width="8.800" height="10.800" fill="#f4f1f4"/><rect x="3.600" y=".2" width="4.800" height="2.800" rx=".8" fill="#8d93a6"/><path d="M2.800 5.600h6.400M2.800 7.600h6.400M2.800 9.600h6.400M2.800 11.600h4.400" stroke="#9aa3c2" stroke-width=".8"/></svg><h3 style="position:absolute;left:46.70px;top:21.70px;font-size:16.5px;line-height:18px;font-weight:700;color:#2b5cbd;letter-spacing:0.266px;">Dati Base Intervento</h3><div class="ul" style="position:absolute;left:19.20px;top:51.50px;width:1528.80px;height:2.00px;"></div><label style="position:absolute;left:19.40px;top:66.70px;font-size:12.9px;line-height:15px;font-weight:700;color:#263f8a;letter-spacing:0.070px;">TIPO INTERVENTO *</label><label style="position:absolute;left:406.80px;top:66.70px;font-size:12.9px;line-height:15px;font-weight:700;color:#263f8a;letter-spacing:0.297px;">DATA *</label><label style="position:absolute;left:794.20px;top:66.70px;font-size:12.9px;line-height:15px;font-weight:700;color:#263f8a;letter-spacing:-0.928px;">ORA</label><label style="position:absolute;left:1181.60px;top:66.70px;font-size:12.9px;line-height:15px;font-weight:700;color:#263f8a;letter-spacing:-0.484px;">OPERATORE</label><div class="inp" style="position:absolute;left:19.20px;top:87.70px;width:366.60px;height:33.00px;"><span style="position:absolute;left:10.00px;top:7.00px;font-size:13.5px;line-height:15px;font-weight:400;color:#374151;letter-spacing:0.051px;">Cauterizzazione epistassi</span><svg class="ic" viewBox="0 0 10 6" width="9.4" height="5.6" preserveAspectRatio="none" style="position:absolute;left:342.60px;top:11.20px;"><path d="M1 1l4 4 4-4" fill="none" stroke="#2f5bb7" stroke-width="1.500" stroke-linecap="round" stroke-linejoin="round"/></svg></div><div class="inp y" style="position:absolute;left:406.60px;top:87.70px;width:366.60px;height:35.00px;"><span style="position:absolute;left:11.00px;top:8.00px;font-size:13.5px;line-height:15px;font-weight:400;color:#374151;letter-spacing:0.602px;">01/03/2025</span><svg class="ic" viewBox="0 0 12 13" width="11.6" height="12.6" preserveAspectRatio="none" style="position:absolute;left:339.40px;top:8.60px;"><path d="M2.600 0v1.300H1.300C.6 1.300 0 1.900 0 2.600v9.100C0 12.400.6 13 1.300 13h9.400c.7 0 1.300-.6 1.300-1.300V2.600c0-.7-.6-1.300-1.300-1.300H9.400V0H8.100v1.300H3.900V0zM1.300 4.600h9.400v7.100H1.300z" fill="#111"/></svg></div><div class="inp y" style="position:absolute;left:794.00px;top:87.70px;width:366.60px;height:37.00px;"><span style="position:absolute;left:11.00px;top:9.00px;font-size:13.5px;line-height:15px;font-weight:400;color:#374151;letter-spacing:-0.395px;">11:20</span><svg class="ic" viewBox="0 0 12 12" width="11.8" height="11.8" preserveAspectRatio="none" style="position:absolute;left:336.80px;top:10.40px;"><circle cx="6" cy="6" r="5.200" fill="none" stroke="#111" stroke-width="1.300"/><path d="M6 3v3.200l2.100 1.300" fill="none" stroke="#111" stroke-width="1.200"/></svg></div><div class="inp y" style="position:absolute;left:1181.40px;top:87.70px;width:366.60px;height:33.00px;"><span style="position:absolute;left:10.00px;top:7.00px;font-size:13.5px;line-height:15px;font-weight:400;color:#374151;letter-spacing:-0.246px;">Dr. Rossi</span></div><label style="position:absolute;left:19.40px;top:155.70px;font-size:12.9px;line-height:15px;font-weight:700;color:#263f8a;letter-spacing:-0.502px;">LATO</label><label style="position:absolute;left:535.90px;top:155.70px;font-size:12.9px;line-height:15px;font-weight:700;color:#263f8a;letter-spacing:-0.313px;">ESITO</label><label style="position:absolute;left:1052.70px;top:155.70px;font-size:12.9px;line-height:15px;font-weight:700;color:#263f8a;letter-spacing:-0.097px;">CONSENSO</label><div class="inp y" style="position:absolute;left:19.20px;top:176.70px;width:495.70px;height:33.00px;"><span style="position:absolute;left:10.00px;top:7.00px;font-size:13.5px;line-height:15px;font-weight:400;color:#374151;letter-spacing:-0.700px;">Dx</span></div><div class="inp y" style="position:absolute;left:535.70px;top:176.70px;width:495.70px;height:33.00px;"><span style="position:absolute;left:10.00px;top:7.00px;font-size:13.5px;line-height:15px;font-weight:400;color:#374151;letter-spacing:-0.074px;">Riuscito</span></div><div class="inp y" style="position:absolute;left:1052.30px;top:176.70px;width:495.70px;height:33.00px;"><span style="position:absolute;left:10.00px;top:7.00px;font-size:13.5px;line-height:15px;font-weight:400;color:#374151;letter-spacing:-0.033px;">Verbale</span></div><label style="position:absolute;left:19.40px;top:240.70px;font-size:12.9px;line-height:15px;font-weight:700;color:#263f8a;letter-spacing:0.006px;">SEDE ANATOMICA DETTAGLIATA</label><div class="inp y" style="position:absolute;left:19.20px;top:261.70px;width:1528.80px;height:33.00px;"><span style="position:absolute;left:10.00px;top:7.00px;font-size:13.5px;line-height:15px;font-weight:400;color:#374151;letter-spacing:0.024px;">Setto anteriore</span></div></fieldset>
<fieldset class="sec" style="position:absolute;left:30.80px;top:433.30px;width:1567.40px;height:168.70px;border:0;"><svg class="ic" viewBox="0 0 12 15" width="14" height="16.4" preserveAspectRatio="none" style="position:absolute;left:23.50px;top:22.20px;"><path d="M6 .3c.6 2.600 4.800 4.600 4.800 8.900A4.900 4.900 0 0 1 6 14.500 4.900 4.900 0 0 1 1.200 9.200C1.200 7 2.600 5.600 3 4c.9.700 1.300 1.600 1.400 2.500C5.400 5 6.200 2.800 6 .3z" fill="#f26a2e"/><path d="M6 7c.4 1.500 2.600 2.500 2.600 4.600A2.600 2.600 0 0 1 6 14.300a2.600 2.600 0 0 1-2.600-2.700c0-1.300.8-2 1.100-2.900.5.400.8.900.8 1.400C5.800 9.200 6.200 8.200 6 7z" fill="#fbbf3f"/></svg><h3 style="position:absolute;left:46.70px;top:21.70px;font-size:16.5px;line-height:18px;font-weight:700;color:#2b5cbd;letter-spacing:0.386px;">Cauterizzazione Epistassi</h3><div class="ul" style="position:absolute;left:19.20px;top:51.50px;width:1528.80px;height:2.00px;"></div><label style="position:absolute;left:19.40px;top:65.70px;font-size:12.9px;line-height:15px;font-weight:700;color:#263f8a;letter-spacing:-0.044px;">SEDE SANGUINAMENTO</label><label style="position:absolute;left:535.90px;top:65.70px;font-size:12.9px;line-height:15px;font-weight:700;color:#263f8a;letter-spacing:-0.083px;">TECNICA</label><label style="position:absolute;left:1052.70px;top:65.70px;font-size:12.9px;line-height:15px;font-weight:700;color:#263f8a;letter-spacing:-0.210px;">ANESTESIA</label><div class="inp y" style="position:absolute;left:19.20px;top:86.70px;width:495.70px;height:33.00px;"><span style="position:absolute;left:10.00px;top:7.00px;font-size:13.5px;line-height:15px;font-weight:400;color:#374151;letter-spacing:-0.007px;">Area di Kiesselbach</span></div><div class="inp y" style="position:absolute;left:535.70px;top:86.70px;width:495.70px;height:33.00px;"><span style="position:absolute;left:10.00px;top:7.00px;font-size:13.5px;line-height:15px;font-weight:400;color:#374151;letter-spacing:0.047px;">Chimica (nitrato argento)</span></div><div class="inp y" style="position:absolute;left:1052.30px;top:86.70px;width:495.70px;height:33.00px;"><span style="position:absolute;left:10.00px;top:7.00px;font-size:13.5px;line-height:15px;font-weight:400;color:#374151;letter-spacing:0.114px;">Topica</span></div></fieldset>
<fieldset class="sec" style="position:absolute;left:30.80px;top:623.30px;width:1567.40px;height:478.20px;border:0;"><svg class="ic" viewBox="0 0 12 15" width="13.6" height="15.6" preserveAspectRatio="none" style="position:absolute;left:23.70px;top:22.60px;"><rect x=".3" y="1.200" width="11.400" height="13.500" rx="1.300" fill="#c98d63"/><rect x="1.600" y="2.800" width="8.800" height="10.800" fill="#f4f1f4"/><rect x="3.600" y=".2" width="4.800" height="2.800" rx=".8" fill="#8d93a6"/><path d="M2.800 5.600h6.400M2.800 7.600h6.400M2.800 9.600h6.400M2.800 11.600h4.400" stroke="#9aa3c2" stroke-width=".8"/></svg><h3 style="position:absolute;left:46.70px;top:21.70px;font-size:16.5px;line-height:18px;font-weight:700;color:#2b5cbd;letter-spacing:0.377px;">Complicanze e Follow-up</h3><div class="ul" style="position:absolute;left:19.20px;top:51.50px;width:1528.80px;height:2.00px;"></div><label style="position:absolute;left:19.40px;top:66.70px;font-size:12.9px;line-height:15px;font-weight:700;color:#263f8a;letter-spacing:0.017px;">COMPLICANZE</label><div class="inp" style="position:absolute;left:19.20px;top:88.00px;width:1528.80px;height:59.40px;"><span style="position:absolute;left:10.00px;top:6.70px;font-size:13.5px;line-height:15px;font-weight:400;color:#767676;letter-spacing:0.101px;">Eventuali complicanze intra/post procedurali</span><svg class="ic" viewBox="0 0 8 8" width="8" height="8" preserveAspectRatio="none" style="position:absolute;left:1515.40px;top:45.90px;"><path d="M7.500 1 1 7.500M7.500 4.500 4.500 7.500" stroke="#555" stroke-width=".9"/></svg></div><label style="position:absolute;left:19.40px;top:158.70px;font-size:12.9px;line-height:15px;font-weight:700;color:#263f8a;letter-spacing:0.099px;">ISTRUZIONI POST-INTERVENTO</label><div class="inp y" style="position:absolute;left:19.20px;top:179.70px;width:1528.80px;height:62.60px;"><span style="position:absolute;left:10.00px;top:7.00px;font-size:13.5px;line-height:15px;font-weight:400;color:#374151;letter-spacing:0.073px;">Applicare pomata emolliente per 7 giorni</span><svg class="ic" viewBox="0 0 8 8" width="8" height="8" preserveAspectRatio="none" style="position:absolute;left:1515.00px;top:48.60px;"><path d="M7.500 1 1 7.500M7.500 4.500 4.500 7.500" stroke="#555" stroke-width=".9"/></svg></div><label style="position:absolute;left:19.40px;top:252.70px;font-size:12.9px;line-height:15px;font-weight:700;color:#263f8a;letter-spacing:-0.123px;">TERAPIA PRESCRITTA</label><label style="position:absolute;left:794.10px;top:252.70px;font-size:12.9px;line-height:15px;font-weight:700;color:#263f8a;letter-spacing:-0.151px;">CONTROLLO PREVISTO</label><div class="inp" style="position:absolute;left:19.20px;top:273.90px;width:754.00px;height:59.40px;"><svg class="ic" viewBox="0 0 8 8" width="8" height="8" preserveAspectRatio="none" style="position:absolute;left:741.00px;top:46.20px;"><path d="M7.500 1 1 7.500M7.500 4.500 4.500 7.500" stroke="#555" stroke-width=".9"/></svg></div><div class="inp y" style="position:absolute;left:794.00px;top:273.70px;width:754.00px;height:35.00px;"><span style="position:absolute;left:11.00px;top:8.00px;font-size:13.5px;line-height:15px;font-weight:400;color:#374151;letter-spacing:0.725px;">10/03/2025</span><svg class="ic" viewBox="0 0 12 13" width="11.6" height="12.6" preserveAspectRatio="none" style="position:absolute;left:725.60px;top:8.40px;"><path d="M2.600 0v1.300H1.300C.6 1.300 0 1.900 0 2.600v9.100C0 12.400.6 13 1.300 13h9.400c.7 0 1.300-.6 1.300-1.300V2.600c0-.7-.6-1.300-1.300-1.300H9.400V0H8.100v1.300H3.900V0zM1.300 4.600h9.400v7.100H1.300z" fill="#111"/></svg></div><label style="position:absolute;left:19.40px;top:364.70px;font-size:12.9px;line-height:15px;font-weight:700;color:#263f8a;letter-spacing:-0.250px;">NOTE GENERALI</label><div class="inp" style="position:absolute;left:19.20px;top:385.90px;width:1528.80px;height:61.40px;"><svg class="ic" viewBox="0 0 8 8" width="8" height="8" preserveAspectRatio="none" style="position:absolute;left:1515.40px;top:48.40px;"><path d="M7.500 1 1 7.500M7.500 4.500 4.500 7.500" stroke="#555" stroke-width=".9"/></svg></div></fieldset>
<fieldset class="sec" style="position:absolute;left:30.80px;top:1122.20px;width:1567.40px;height:157.20px;border:0;"><svg class="ic" viewBox="0 0 10 16" width="10.4" height="16" preserveAspectRatio="none" style="position:absolute;left:25.30px;top:22.40px;"><path d="M2.200 6V3.600a2.800 2.800 0 0 1 5.600 0v8a2.800 2.800 0 0 1-5.600 0V7.500a1.600 1.600 0 0 1 3.200 0v4" fill="none" stroke="#4b4f5c" stroke-width="1.100" stroke-linecap="round"/><circle cx="3.600" cy="4.200" r=".6" fill="#222"/><circle cx="6.400" cy="4.200" r=".6" fill="#222"/></svg><h3 style="position:absolute;left:46.70px;top:21.80px;font-size:16.5px;line-height:18px;font-weight:700;color:#2b5cbd;letter-spacing:0.250px;">File Allegato</h3><div class="ul" style="position:absolute;left:19.20px;top:51.50px;width:1528.80px;height:2.00px;"></div><div class="up" style="position:absolute;left:19.20px;top:65.80px;width:1528.80px;height:62.00px;border:2px dashed #5f74c6;border-radius:9px;"><svg class="ic" viewBox="0 0 15 12" width="12.8" height="12.2" preserveAspectRatio="none" style="position:absolute;left:621.00px;top:23.80px;"><path d="M.4 1.600c0-.8.500-1.300 1.300-1.300h3.600l1.500 1.600h6.500c.8 0 1.300.5 1.300 1.300v7.200c0 .8-.5 1.300-1.300 1.300H1.700c-.8 0-1.300-.5-1.300-1.300z" fill="#f2b336"/><path d="M.4 3.600h14.200v6.800c0 .8-.5 1.300-1.300 1.300H1.700c-.8 0-1.300-.5-1.300-1.300z" fill="#fbcf56"/></svg><span style="position:absolute;left:639.80px;top:22.00px;font-size:13px;line-height:15px;font-weight:700;color:#6a80d2;letter-spacing:0.051px;">Carica consenso firmato, foto o documenti</span></div></fieldset><div class="acts" style="position:absolute;left:30.60px;top:1300.30px;width:1567.80px;height:84.40px;border:1px solid #e8ecf5;border-radius:13px;background:linear-gradient(135deg,#ffffff 0%,#f6f9fe 100%);box-shadow:0 1px 3px rgba(30,58,138,.04);"><button class="nb" style="position:absolute;left:1239.60px;top:19.90px;width:104.60px;height:42.40px;"><span style="position:absolute;left:24.40px;top:12.80px;font-size:15.5px;line-height:17px;font-weight:700;color:#1e3560;letter-spacing:0.000px;font-family:'DejaVu Sans',sans-serif;">↺</span><span style="position:absolute;left:39.50px;top:11.80px;font-size:14.2px;line-height:16px;font-weight:700;color:#1e3560;letter-spacing:-0.364px;">Reset</span></button><button class="btn" style="position:absolute;left:1356.50px;top:19.90px;width:184.70px;height:42.40px;border:0;background:linear-gradient(135deg,#1e40af 0%,#2563eb 50%,#3b82f6 100%);box-shadow:0 2px 6px rgba(30,64,175,.22);"><svg class="ic" viewBox="0 0 13 14" width="12.4" height="13.4" preserveAspectRatio="none" style="position:absolute;left:29.70px;top:14.20px;"><path d="M.5 1.500c0-.6.400-1 1-1h9l2 2v10c0 .6-.4 1-1 1h-10c-.6 0-1-.4-1-1z" fill="#4a3b73"/><rect x="3" y=".5" width="6.500" height="4.300" fill="#e8e9f2"/><rect x="7" y="1.100" width="1.600" height="3" fill="#4a3b73"/><rect x="2" y="7.400" width="9" height="6.100" fill="#f6c9d2"/><rect x="2" y="7.400" width="9" height="2" fill="#e24a6a"/></svg><span style="position:absolute;left:49.10px;top:13.80px;font-size:14.2px;line-height:16px;font-weight:700;color:#ffffff;letter-spacing:0.006px;">Salva Intervento</span></button></div></form></main>
</body></html>
